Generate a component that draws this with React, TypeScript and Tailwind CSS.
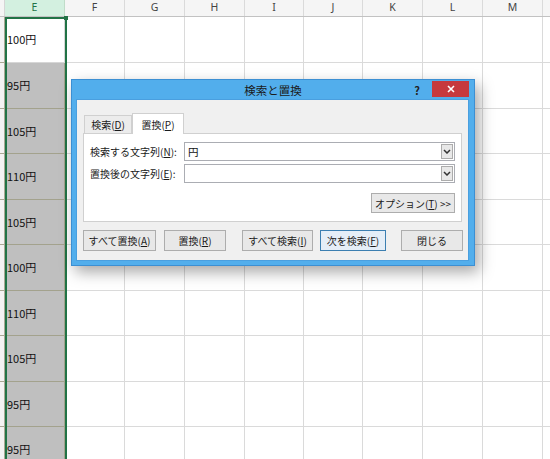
import React from "react";

const cols = [
  { name: "E", w: "w-[60px]" },
  { name: "F", w: "w-[60px]" },
  { name: "G", w: "w-[60px]" },
  { name: "H", w: "w-[60px]" },
  { name: "I", w: "w-[59px]" },
  { name: "J", w: "w-[59px]" },
  { name: "K", w: "w-[60px]" },
  { name: "L", w: "w-[60px]" },
  { name: "M", w: "w-[60px]" },
];

const rows = [
  { v: "100円", h: "h-[46px]" },
  { v: "95円", h: "h-[46px]" },
  { v: "105円", h: "h-[45px]" },
  { v: "110円", h: "h-[46px]" },
  { v: "105円", h: "h-[45px]" },
  { v: "100円", h: "h-[46px]" },
  { v: "110円", h: "h-[45px]" },
  { v: "105円", h: "h-[46px]" },
  { v: "95円", h: "h-[45px]" },
  { v: "95円", h: "h-[46px]" },
];

const ui = { fontFamily: '"Noto Sans CJK JP", "Noto Sans", sans-serif' };

function Chevron() {
  return (
    <svg width="8" height="5" viewBox="0 0 8 5">
      <path d="M1 1 L4 4 L7 1" stroke="#333" strokeWidth="1.5" fill="none" />
    </svg>
  );
}

function Combo({ value }: { value?: string }) {
  return (
    <div className="flex h-[19px] w-[271px] items-stretch border border-[#abadb3] bg-white">
      <div className="flex flex-1 items-center pl-[3px] text-[10.5px] text-[#111]">{value}</div>
      <div className="m-[1px] flex w-[12px] items-center justify-center border border-[#acacac] bg-[#e8e8e8]">
        <Chevron />
      </div>
    </div>
  );
}

function Btn({ w, focus, children }: { w: string; focus?: boolean; children: React.ReactNode }) {
  return (
    <div
      className={`flex h-[21px] ${w} items-center justify-center border text-[10px] text-[#1a1a1a] ${
        focus ? "border-[#3c7fb1] bg-[#e5eef7]" : "border-[#adadad] bg-[#e8e8e8]"
      }`}
    >
      {children}
    </div>
  );
}

export default function App() {
  return (
    <div className="relative h-[459px] w-[550px] overflow-hidden bg-white">
      {/* header row */}
      <div className="flex h-[17px] border-b border-[#c2c2c2] bg-[#f5f5f5]" style={{ fontFamily: '"Noto Sans", sans-serif' }}>
        <div className="w-[5px] border-r border-[#d6d6d6]" />
        {cols.map((c) => (
          <div
            key={c.name}
            className={`${c.w} flex items-center justify-center border-r text-[10.5px] ${
              c.name === "E"
                ? "border-[#c0dcc9] bg-[#d3f0e0] text-[#217346]"
                : "border-[#dadada] text-[#444]"
            }`}
          >
            {c.name}
          </div>
        ))}
        <div className="flex-1" />
      </div>

      {/* cells */}
      {rows.map((r, i) => (
        <div key={i} className={`flex ${r.h}`}>
          <div className="w-[5px] border-b border-r border-[#a9a894] bg-[#f3f3f3]" />
          {cols.map((c) =>
            c.name === "E" ? (
              <div
                key={c.name}
                className={`${c.w} flex items-center border-b border-r pl-[2px] text-[11px] text-[#111] ${
                  i === 0 ? "border-[#d6d6d6] bg-white" : "border-[#a3a28d] bg-[#bfbfbf]"
                }`}
                style={ui}
              >
                {r.v}
              </div>
            ) : (
              <div key={c.name} className={`${c.w} border-b border-r border-[#dadada]`} />
            )
          )}
          <div className="flex-1 border-b border-[#dadada]" />
        </div>
      ))}

      {/* selection */}
      <div className="absolute left-[5px] top-[17px] h-[460px] w-[62px] border-2 border-[#217346]" />
      <div className="absolute left-[64px] top-[16px] h-[4px] w-[4px] bg-[#217346]" />

      {/* dialog */}
      <div
        className="absolute left-[71px] top-[79px] flex h-[187px] w-[404px] flex-col border border-[#3b8fd3] bg-[#52aeec] shadow-[4px_6px_14px_rgba(0,0,0,0.35)]"
        style={ui}
      >
        <div className="relative flex h-[19px] items-start justify-end">
          <div className="absolute inset-x-0 top-[2px] text-center text-[11.5px] text-[#1b1b1b]">検索と置換</div>
          <div className="relative mr-[12px] mt-[2px] text-[11px] font-bold text-[#222]">?</div>
          <div className="relative mr-[5px] mt-[1px] flex h-[16px] w-[37px] items-center justify-center bg-[#c6393d]">
            <svg width="8" height="8" viewBox="0 0 8 8">
              <path d="M1 1 L7 7 M7 1 L1 7" stroke="#fff" strokeWidth="1.6" />
            </svg>
          </div>
        </div>

        <div className="ml-[4px] mr-[5px] flex h-[162px] flex-col border border-[#4a9fdf] bg-[#f0f0f0]">
          {/* tabs */}
          <div className="flex h-[33px] items-end pl-[7px]">
            <div className="flex h-[18px] w-[48px] items-center justify-center border border-b-0 border-[#d0d0d0] bg-[#ececec] text-[10px] text-[#1a1a1a]">
              検索(<u>D</u>)
            </div>
            <div className="relative -mb-px flex h-[21px] w-[52px] items-center justify-center border border-b-0 border-[#d0d0d0] bg-white text-[10px] text-[#1a1a1a]">
              置換(<u>P</u>)
            </div>
          </div>

          {/* panel */}
          <div className="ml-[6px] flex h-[89px] w-[379px] flex-col border border-[#d0d0d0] bg-white px-[6px] pt-[8px]">
            <div className="flex items-center">
              <div className="w-[94px] text-[10px] text-[#1a1a1a]">
                検索する文字列(<u>N</u>):
              </div>
              <Combo value="円" />
            </div>
            <div className="mt-[3px] flex items-center">
              <div className="w-[94px] text-[10px] text-[#1a1a1a]">
                置換後の文字列(<u>E</u>):
              </div>
              <Combo />
            </div>
            <div className="mt-[10px] flex justify-end">
              <div className="flex h-[20px] w-[84px] items-center justify-center border border-[#adadad] bg-[#e8e8e8] text-[10px] text-[#1a1a1a]">
                オプション(<u>T</u>)&nbsp;&gt;&gt;
              </div>
            </div>
          </div>

          {/* buttons */}
          <div className="mt-[8px] flex pl-[6px]">
            <Btn w="w-[73px]">
              すべて置換(<u>A</u>)
            </Btn>
            <div className="ml-[8px]">
              <Btn w="w-[62px]">
                置換(<u>R</u>)
              </Btn>
            </div>
            <div className="ml-[16px]">
              <Btn w="w-[71px]">
                すべて検索(<u>I</u>)
              </Btn>
            </div>
            <div className="ml-[7px]">
              <Btn w="w-[66px]" focus>
                次を検索(<u>F</u>)
              </Btn>
            </div>
            <div className="ml-[15px]">
              <Btn w="w-[62px]">閉じる</Btn>
            </div>
          </div>
        </div>
      </div>
    </div>
  );
}
